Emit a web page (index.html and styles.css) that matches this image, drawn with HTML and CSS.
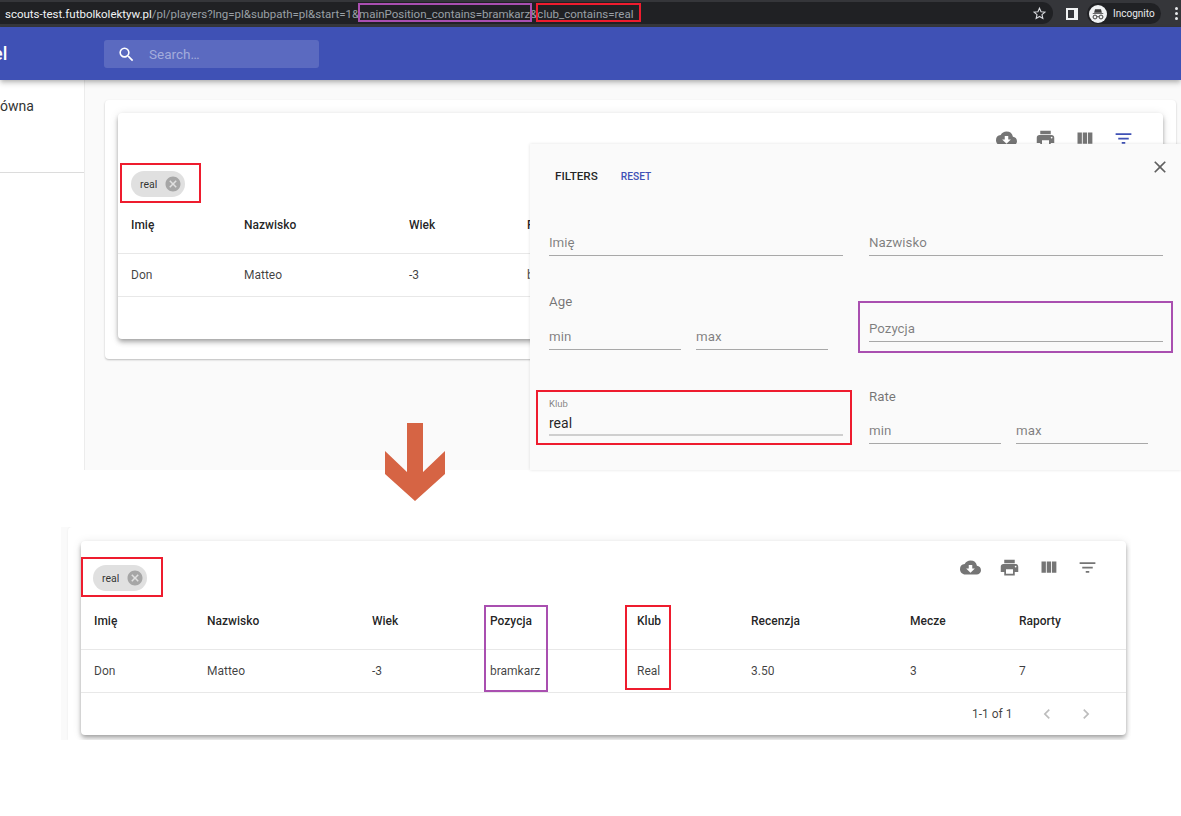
FILE: index.html
```html
<!DOCTYPE html>
<html lang="pl">
<head>
<meta charset="utf-8">
<title>Players</title>
<link rel="stylesheet" href="styles.css">
</head>
<body>
<header class="chrome">
  <div class="url"><span class="host">scouts-test.futbolkolektyw.pl</span>/pl/players?lng=pl&amp;subpath=pl&amp;start=1&amp;mainPosition_contains=bramkarz&amp;club_contains=real</div>
  <svg class="star" viewBox="0 0 24 24"><path d="M12 3.500l2.500 5.600 6.100.6-4.600 4.100 1.300 6-5.300-3.100-5.300 3.100 1.300-6-4.600-4.100 6.100-.6z" fill="none" stroke="#dadce0" stroke-width="1.800"/></svg>
  <span class="panel-icon"></span>
  <div class="incognito">
    <span class="avatar"><svg viewBox="0 0 24 24"><path d="M5 11h14v1H5zM8 5.500h8l1.200 4.800H6.800z" fill="#3c3c3c"/><circle cx="8" cy="16" r="2.600" fill="none" stroke="#3c3c3c" stroke-width="1.300"/><circle cx="16" cy="16" r="2.600" fill="none" stroke="#3c3c3c" stroke-width="1.300"/><path d="M10.500 15.500h3" stroke="#3c3c3c"/></svg></span>
    <span>Incognito</span>
  </div>
  <span class="dots"><i></i><i></i><i></i></span>
</header>

<section class="upper">
  <div class="appbar">
    <span class="brand">el</span>
    <div class="search">
      <svg viewBox="0 0 24 24"><path fill="#fff" d="M15.500 14h-.79l-.28-.27A6.470 6.470 0 0 0 16 9.500 6.500 6.500 0 1 0 9.500 16c1.610 0 3.090-.59 4.230-1.570l.27.28v.79l5 4.990L20.490 19l-4.990-5zm-6 0C7.010 14 5 11.990 5 9.500S7.010 5 9.500 5 14 7.010 14 9.500 11.990 14 9.500 14z"/></svg>
      <span>Search…</span>
    </div>
  </div>
  <div class="workspace">
    <aside class="sidebar"><div class="nav-item">ówna</div></aside>
    <main class="content">
      <div class="outer-card">
        <div class="table-card upper-table">
          <div class="toolbar">
            <svg viewBox="0 0 24 24"><use href="#i-cloud"/></svg>
            <svg viewBox="0 0 24 24"><use href="#i-print"/></svg>
            <svg viewBox="0 0 24 24"><use href="#i-cols"/></svg>
            <svg class="active" viewBox="0 0 24 24"><use href="#i-filter"/></svg>
          </div>
          <div class="chip-row">
            <span class="chip">real<svg viewBox="0 0 24 24"><use href="#i-cancel"/></svg></span>
          </div>
          <div class="row head upper-cols"><span>Imię</span><span>Nazwisko</span><span>Wiek</span><span>Pozycja</span></div>
          <div class="row body upper-cols"><span>Don</span><span>Matteo</span><span>-3</span><span>bramkarz</span></div>
        </div>
      </div>
    </main>
  </div>
  <div class="filters">
    <div class="filters-head"><span class="filters-title">FILTERS</span><span class="reset">RESET</span>
      <svg class="close" viewBox="0 0 24 24"><path fill="#5f5f5f" d="M19 6.410 17.590 5 12 10.590 6.410 5 5 6.410 10.590 12 5 17.590 6.410 19 12 13.410 17.590 19 19 17.590 13.410 12z"/></svg>
    </div>
    <div class="filters-grid">
      <div class="field f-first"><span class="ph">Imię</span></div>
      <div class="field f-first"><span class="ph">Nazwisko</span></div>
      <div class="range r-age">
        <div class="range-label">Age</div>
        <div class="range-fields"><div class="field"><span class="ph">min</span></div><div class="field"><span class="ph">max</span></div></div>
      </div>
      <div class="field f-pos"><span class="ph">Pozycja</span></div>
      <div class="field f-club"><span class="mini">Klub</span><span class="val">real</span></div>
      <div class="range r-rate">
        <div class="range-label">Rate</div>
        <div class="range-fields"><div class="field"><span class="ph">min</span></div><div class="field"><span class="ph">max</span></div></div>
      </div>
    </div>
  </div>
</section>

<div class="arrow-band"></div>
<svg class="arrow" viewBox="0 0 60 78" width="60" height="78"><path fill="#d66444" d="M22 0h16v49l22-21v23L30 78 0 51V28l22 21z"/></svg>

<section class="lower">
  <div class="lower-paper">
    <div class="table-card lower-table">
      <div class="lower-top">
        <span class="chip">real<svg viewBox="0 0 24 24"><use href="#i-cancel"/></svg></span>
        <div class="toolbar">
          <svg viewBox="0 0 24 24"><use href="#i-cloud"/></svg>
          <svg viewBox="0 0 24 24"><use href="#i-print"/></svg>
          <svg viewBox="0 0 24 24"><use href="#i-cols"/></svg>
          <svg viewBox="0 0 24 24"><use href="#i-filter"/></svg>
        </div>
      </div>
      <div class="row head lower-cols"><span>Imię</span><span>Nazwisko</span><span>Wiek</span><span>Pozycja</span><span>Klub</span><span>Recenzja</span><span>Mecze</span><span>Raporty</span></div>
      <div class="row body lower-cols"><span>Don</span><span>Matteo</span><span>-3</span><span>bramkarz</span><span>Real</span><span>3.50</span><span>3</span><span>7</span></div>
      <div class="pager">
        <span>1-1 of 1</span>
        <svg viewBox="0 0 24 24"><path d="M15.410 7.410 14 6l-6 6 6 6 1.410-1.410L10.830 12z"/></svg>
        <svg viewBox="0 0 24 24"><path d="M10 6 8.590 7.410 13.170 12l-4.580 4.590L10 18l6-6z"/></svg>
      </div>
    </div>
  </div>
</section>

<div class="mark purple m-url-pos"></div>
<div class="mark red m-url-club"></div>
<div class="mark purple m-field-pos"></div>
<div class="mark red m-chip-up"></div>
<div class="mark red m-field-club"></div>
<div class="mark purple m-col-pos"></div>
<div class="mark red m-chip-low"></div>
<div class="mark red m-col-club"></div>

<svg class="defs" width="0" height="0">
  <symbol id="i-cloud" viewBox="0 0 24 24"><path d="M19.350 10.040A7.490 7.490 0 0 0 12 4C9.110 4 6.600 5.640 5.350 8.040A5.994 5.994 0 0 0 0 14c0 3.310 2.690 6 6 6h13c2.760 0 5-2.240 5-5 0-2.640-2.050-4.780-4.650-4.960zM17 13l-5 5-5-5h3V9h4v4h3z"/></symbol>
  <symbol id="i-print" viewBox="0 0 24 24"><path d="M19 8H5c-1.660 0-3 1.340-3 3v6h4v4h12v-4h4v-6c0-1.660-1.340-3-3-3zm-3 11H8v-5h8v5zm3-7c-.55 0-1-.45-1-1s.45-1 1-1 1 .45 1 1-.45 1-1 1zm-1-9H6v4h12V3z"/></symbol>
  <symbol id="i-cols" viewBox="0 0 24 24"><path d="M10 18h5V5h-5v13zm-6 0h5V5H4v13zM16 5v13h5V5h-5z"/></symbol>
  <symbol id="i-filter" viewBox="0 0 24 24"><path d="M10 18h4v-2h-4v2zM3 6v2h18V6H3zm3 7h12v-2H6v2z"/></symbol>
  <symbol id="i-cancel" viewBox="0 0 24 24"><path d="M12 2C6.470 2 2 6.470 2 12s4.470 10 10 10 10-4.470 10-10S17.530 2 12 2zm5 13.590L15.590 17 12 13.410 8.410 17 7 15.590 10.590 12 7 8.410 8.410 7 12 10.590 15.590 7 17 8.410 13.410 12 17 15.590z"/></symbol>
</svg>
</body>
</html>
```
FILE: styles.css
```css
* { box-sizing: border-box; }
html, body { margin: 0; padding: 0; }
body {
  position: relative;
  width: 1181px;
  height: 816px;
  overflow: hidden;
  background: #fff;
  font-family: Roboto, "Liberation Sans", sans-serif;
  color: rgba(0, 0, 0, .87);
}
.defs { position: absolute; }

/* browser chrome */
.chrome {
  height: 27px;
  background: #35363a;
  display: flex;
  align-items: center;
  color: #e8eaed;
  position: relative;
}
.chrome::before {
  content: "";
  position: absolute;
  left: 0; top: 2px; bottom: 3px;
  width: 1053px;
  background: #202124;
  border-radius: 0 12px 12px 0;
}
.chrome > * { flex: none; }
.url {
  position: relative;
  width: 1031px;
  padding-left: 5px;
  font: 11.500px Roboto, sans-serif;
  color: #9aa0a6;
  white-space: nowrap;
}
.host { color: #f1f3f4; }
.star { position: relative; width: 15px; height: 15px; margin-left: 1px; }
.panel-icon {
  margin-left: 19px;
  width: 12px; height: 12px;
  border: 2px solid #f1f3f4;
  border-right-width: 4px;
  background: #35363a;
}
.incognito {
  margin-left: 9px;
  width: 74px;
  height: 21px;
  border-radius: 11px;
  background: #202124;
  display: flex;
  align-items: center;
  gap: 6px;
  font-size: 10px;
  color: #e8eaed;
}
.avatar { width: 18px; height: 18px; margin-left: 2px; border-radius: 50%; background: #f1f3f4; display: flex; }
.avatar svg { width: 18px; height: 18px; }
.dots { margin-left: 14px; display: flex; flex-direction: column; gap: 2px; }
.dots i { width: 3px; height: 3px; border-radius: 50%; background: #e8eaed; display: block; }

/* upper screenshot */
.upper { position: relative; height: 443px; }
.appbar {
  height: 53px;
  background: #3f51b5;
  box-shadow: 0 2px 4px -1px rgba(0,0,0,.2), 0 4px 5px rgba(0,0,0,.14);
  position: relative;
  z-index: 2;
  display: flex;
  align-items: center;
}
.brand {
  width: 111px;
  margin-left: -7px;
  font-size: 18px;
  font-weight: 500;
  color: #fff;
  flex: none;
}
.search {
  width: 215px;
  height: 28px;
  margin-top: 1px;
  border-radius: 3px;
  background: rgba(255,255,255,.15);
  display: flex;
  align-items: center;
  padding-left: 13px;
  gap: 13px;
  color: rgba(255,255,255,.45);
  font-size: 13.500px;
}
.search svg { width: 19px; height: 19px; }
.workspace { display: flex; height: 390px; }
.sidebar { width: 85px; flex: none; border-right: 1px solid #ececec; background: #fff; }
.nav-item {
  height: 93px;
  border-bottom: 1px solid #dcdcdc;
  padding-top: 18px;
  font-size: 14px;
  line-height: 17px;
  color: #333;
}
.content { flex: 1; background: #fafafa; padding: 20px 0 0 20px; }
.outer-card {
  width: 1071px;
  height: 259px;
  background: #fff;
  border-radius: 4px;
  padding: 13px 0 0 13px;
  box-shadow: 0 1px 2px rgba(0,0,0,.25);
}

/* tables */
.table-card {
  background: #fff;
  border-radius: 4px;
  box-shadow: 0 2px 4px -1px rgba(0,0,0,.25), 0 4px 5px rgba(0,0,0,.16), 0 1px 10px rgba(0,0,0,.1);
}
.upper-table { width: 1045px; height: 226px; }
.toolbar { display: flex; justify-content: flex-end; gap: 18px; }
.toolbar svg { width: 21px; height: 21px; fill: #757575; }
.toolbar svg.active { fill: #3f51b5; }
.upper-table .toolbar { padding: 15px 29px 0 0; height: 52px; }
.chip-row { padding: 6px 0 0 13px; height: 40px; }
.chip {
  display: inline-flex;
  align-items: center;
  justify-content: space-between;
  width: 54px;
  height: 26px;
  padding: 0 3.500px 0 9px;
  border-radius: 13px;
  background: #e0e0e0;
  font-size: 10.500px;
  color: rgba(0,0,0,.8);
}
.chip svg { width: 18px; height: 18px; fill: #a6a6a6; }
.row {
  display: grid;
  align-items: center;
  font-size: 12px;
  border-bottom: 1px solid #e8e8e8;
}
.row span { white-space: nowrap; }
.head { font-weight: 500; color: rgba(0,0,0,.87); }
.body { color: rgba(0,0,0,.75); height: 43px; }
.upper-cols { grid-template-columns: 113px 165px 118px 200px; padding-left: 13px; }
.upper-table .head { height: 49px; padding-bottom: 8px; }
.lower-cols { grid-template-columns: 113px 165px 118px 147px 114px 159px 109px 100px; padding-left: 13px; }
.lower-table .head { height: 47px; padding-bottom: 11px; }

/* filter popover */
.filters {
  position: absolute;
  left: 530px;
  top: 117px;
  width: 651px;
  height: 326px;
  background: #fafafa;
  box-shadow: 0 0 3px rgba(0,0,0,.12);
  padding: 0 19px;
  overflow: hidden;
  z-index: 1;
}
.filters-head { position: relative; height: 64px; padding: 25px 0 0 6px; display: flex; align-items: baseline; gap: 23px; }
.filters-title { font-size: 11.700px; font-weight: 500; color: rgba(0,0,0,.87); }
.reset { font-size: 10.200px; font-weight: 500; color: #3f51b5; }
.close { position: absolute; right: -8px; top: 13px; width: 20px; height: 20px; }
.filters-grid {
  display: grid;
  grid-template-columns: 294px 294px;
  column-gap: 26px;
  grid-template-rows: 48px 124px 72px;
  align-items: start;
}
.field {
  height: 31px;
  border-bottom: 1px solid #a8a8a8;
  position: relative;
}
.f-first { margin-top: 17px; }
.ph { color: rgba(0,0,0,.5); display: block; padding-top: 10px; line-height: 16px; font-size: 13.300px; }
.range-label { font-size: 13.300px; line-height: 16px; color: rgba(0,0,0,.55); }
.range-fields { display: flex; gap: 15px; }
.range-fields .field { width: 132px; }
.r-age { margin-top: 38px; }
.r-age .range-fields { margin-top: 9px; }
.f-pos { margin-top: 55px; }
.f-club { margin-top: 18px; height: 38px; border-bottom: 2px solid #cfcfcf; }
.mini { display: block; font-size: 9.500px; line-height: 11px; color: rgba(0,0,0,.5); }
.val { display: block; font-size: 14px; line-height: 18px; margin-top: 5px; color: rgba(0,0,0,.87); }
.r-rate { margin-top: 9px; }
.r-rate .range-fields { margin-top: 8px; }

/* arrow between the two screenshots */
.arrow-band { height: 57px; }
.arrow { position: absolute; left: 385px; top: 423px; z-index: 3; }

/* lower screenshot */
.lower {
  margin-left: 61px;
  width: 1070px;
  height: 213px;
  padding-left: 7px;
  background: #fafafa;
  overflow: hidden;
}
.lower-paper {
  height: 213px;
  padding: 14px 0 0 13px;
  background: #fff;
  border-radius: 4px 0 0 0;
  box-shadow: 0 0 2px rgba(0,0,0,.08);
}
.lower-table { width: 1045px; height: 194px; }
.lower-top { height: 62px; display: flex; justify-content: space-between; align-items: flex-start; padding: 0 28px 0 12px; }
.lower-top .chip { margin-top: 24px; }
.lower-top .toolbar { padding-top: 15.500px; }
.pager {
  height: 42px;
  display: flex;
  align-items: center;
  justify-content: flex-end;
  gap: 19px;
  padding-right: 30px;
  font-size: 12px;
  color: rgba(0,0,0,.75);
}
.pager span { margin-right: 5.500px; }
.pager svg { width: 20px; height: 20px; fill: #bdbdbd; }

/* annotation boxes */
.mark { position: absolute; border: 2px solid; z-index: 5; }
.red { border-color: #ee1c2e; }
.purple { border-color: #a94fb0; }
.m-url-pos { left: 358px; top: 3px; width: 174px; height: 19px; }
.m-url-club { left: 536px; top: 3px; width: 105px; height: 19px; }
.m-field-pos { left: 858px; top: 301px; width: 315px; height: 52px; }
.m-chip-up { left: 120px; top: 163px; width: 81px; height: 40px; }
.m-field-club { left: 536px; top: 390px; width: 316px; height: 55px; }
.m-col-pos { left: 484px; top: 605px; width: 64px; height: 87px; }
.m-chip-low { left: 81px; top: 557px; width: 82px; height: 40px; }
.m-col-club { left: 625px; top: 605px; width: 46px; height: 85px; }
```
